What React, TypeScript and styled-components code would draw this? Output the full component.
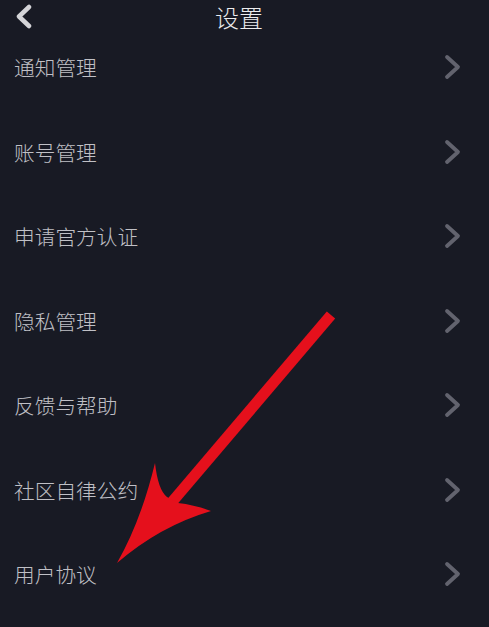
import styled, { createGlobalStyle } from 'styled-components';

const items: string[] = [
    '通知管理',
    '账号管理',
    '申请官方认证',
    '隐私管理',
    '反馈与帮助',
    '社区自律公约',
    '用户协议',
];

const GlobalStyle = createGlobalStyle`
    html, body {
        margin: 0;
        padding: 0;
        background: #181a24;
    }
    * {
        box-sizing: border-box;
    }
`;

const Page = styled.div`
    position: relative;
    width: 489px;
    height: 627px;
    overflow: hidden;
    background: #181a24;
    font-family: 'Noto Sans CJK SC', 'Noto Sans', sans-serif;
`;

const Header = styled.div`
    position: relative;
    height: 25px;
    display: flex;
    justify-content: center;
    align-items: flex-start;
`;

const BackButton = styled.div`
    position: absolute;
    left: 15px;
    top: 4px;
    width: 18px;
    height: 25px;
    display: flex;
`;

const Title = styled.div`
    color: #ececee;
    font-size: 24px;
    line-height: 33px;
    font-weight: 300;
    margin-right: 11px;
`;

const List = styled.div`
    display: flex;
    flex-direction: column;
`;

const Row = styled.div`
    height: 84.5px;
    display: flex;
    align-items: center;
    justify-content: space-between;
    padding: 0 28px 0 14px;
`;

const Label = styled.div`
    color: #c0c0c6;
    font-size: 20.7px;
    line-height: 28px;
    font-weight: 300;
`;

const Chevron = styled.div`
    width: 17px;
    height: 26px;
    display: flex;
`;

const Overlay = styled.svg`
    position: absolute;
    left: 0;
    top: 0;
    pointer-events: none;
`;

const App: React.FC = () => {
    return (
        <Page>
            <GlobalStyle />
            <Header>
                <BackButton>
                    <svg width='18' height='25' viewBox='0 0 18 25'>
                        <polyline
                            points='14,3 4,12.5 14,22'
                            fill='none'
                            stroke='#d4d4d8'
                            strokeWidth='4.5'
                            strokeLinecap='round'
                            strokeLinejoin='round'
                        />
                    </svg>
                </BackButton>
                <Title>设置</Title>
            </Header>
            <List>
                {items.map((item) => (
                    <Row key={item}>
                        <Label>{item}</Label>
                        <Chevron>
                            <svg width='17' height='26' viewBox='0 0 17 26'>
                                <polyline
                                    points='3,3 14,13 3,23'
                                    fill='none'
                                    stroke='#62636e'
                                    strokeWidth='3.8'
                                    strokeLinecap='round'
                                    strokeLinejoin='round'
                                />
                            </svg>
                        </Chevron>
                    </Row>
                ))}
            </List>
            <Overlay width='489' height='627' viewBox='0 0 489 627'>
                <line x1='331' y1='315' x2='172' y2='502' stroke='#e5101c' strokeWidth='11' />
                <path
                    d='M155,463 Q158,490 167,497 L178,503 Q195,505 211,511 Q160,526 117,563 Q141,521 155,463 Z'
                    fill='#e5101c'
                />
            </Overlay>
        </Page>
    );
};

export default App;
